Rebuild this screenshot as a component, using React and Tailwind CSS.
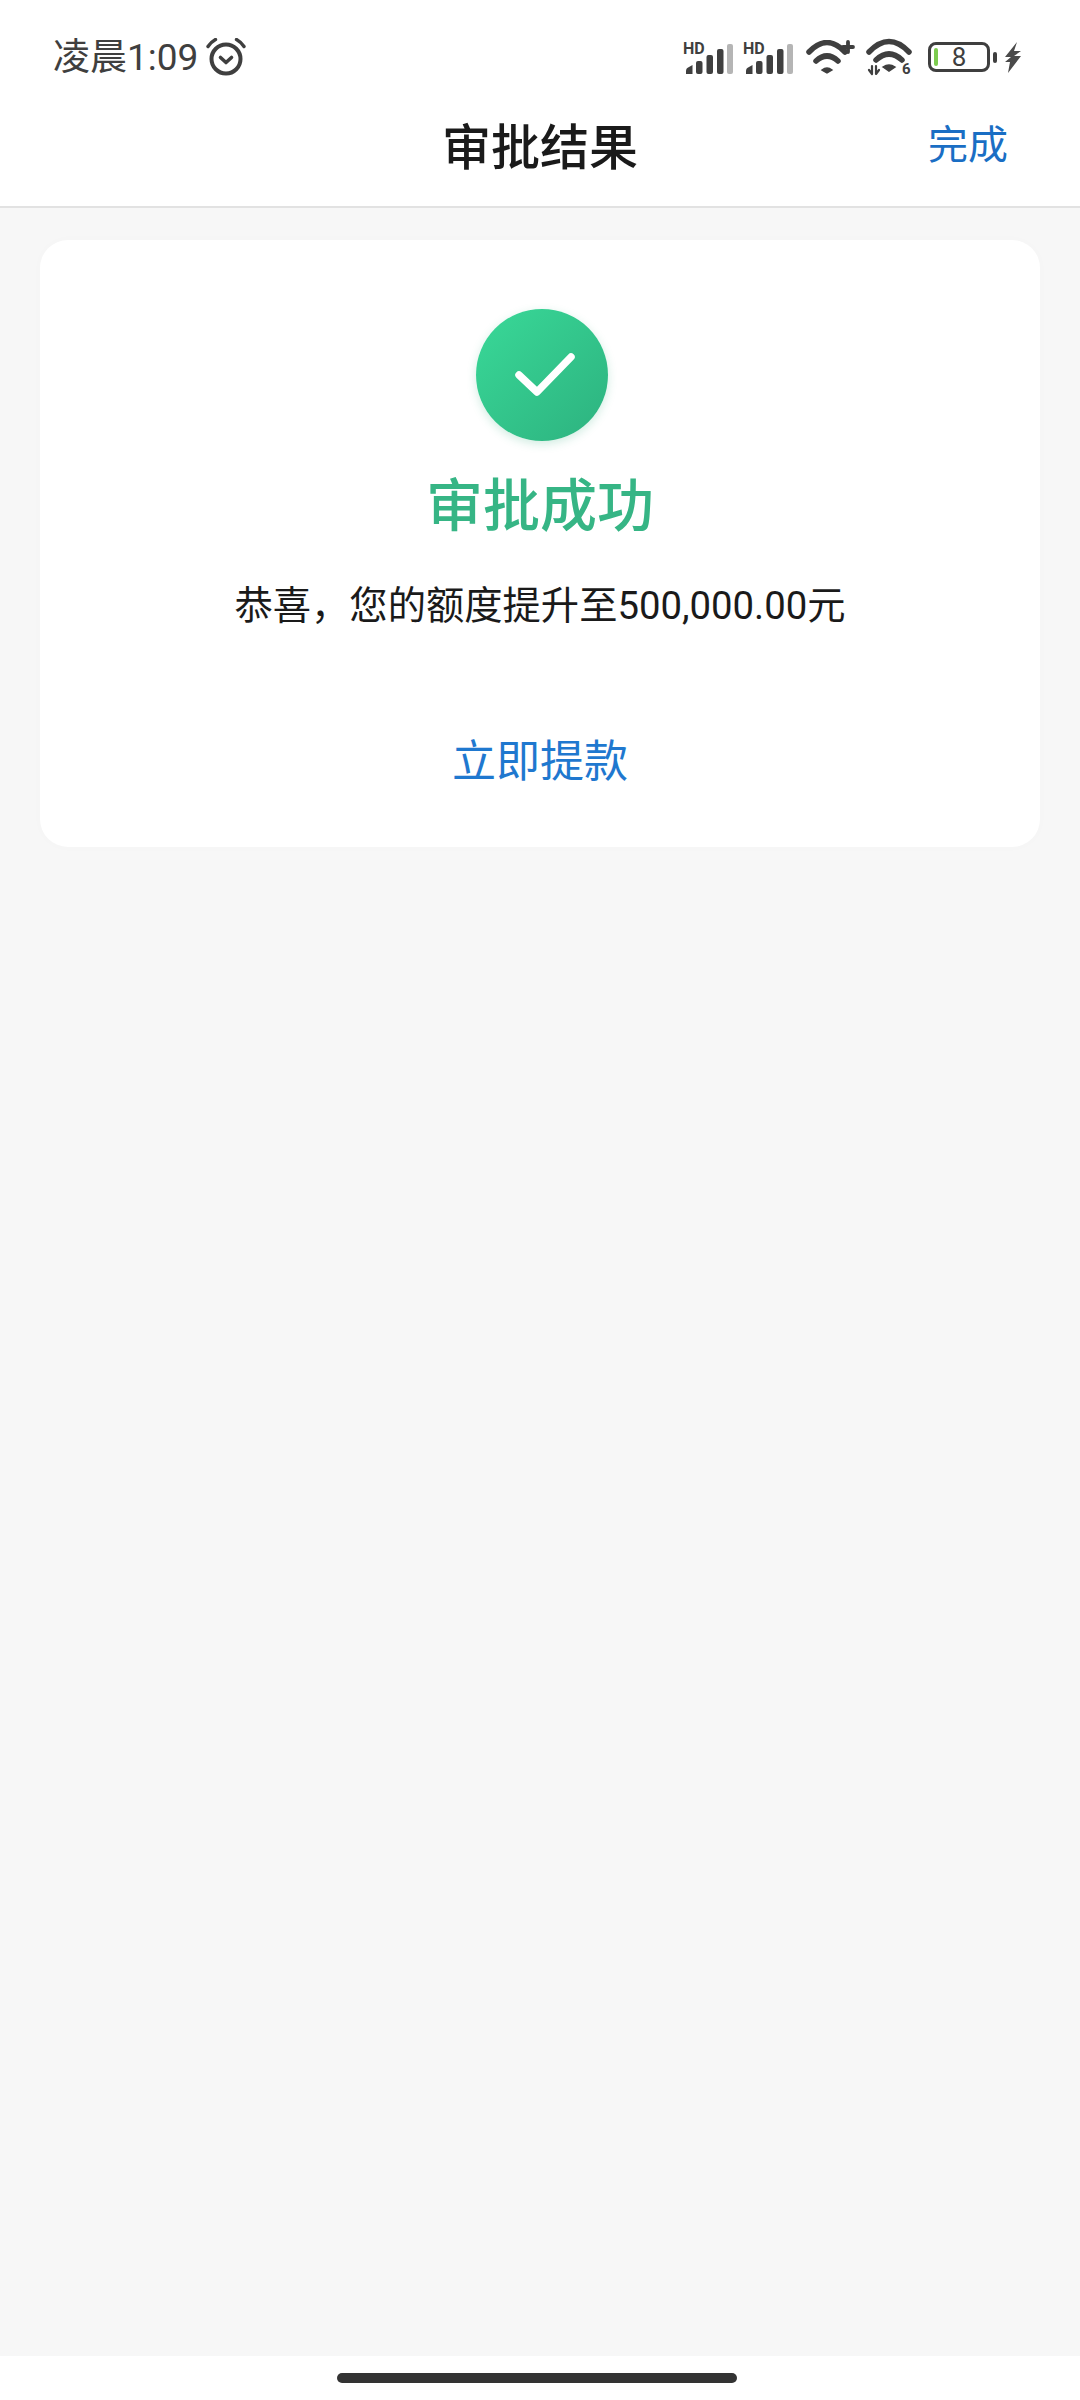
import React from "react";

const FONT = "font-['Roboto','Noto_Sans_CJK_SC',sans-serif]";

function AlarmIcon() {
  return (
    <svg width="40" height="38" viewBox="0 0 40 38" fill="none" stroke="#3f3f3f" strokeLinecap="round" strokeLinejoin="round">
      <circle cx="20" cy="21" r="14.5" strokeWidth="4" />
      <path d="M14.5 19.5 L20 24.5 L25.5 19.5" strokeWidth="3.6" />
      <path d="M2 8.5 Q5 4 9.5 1.5" strokeWidth="3.4" />
      <path d="M38 8.5 Q35 4 30.5 1.5" strokeWidth="3.4" />
    </svg>
  );
}

function SignalIcon() {
  return (
    <svg className="mb-[6px]" width="50" height="39" viewBox="0 -6 50 39" fill="#3f3f3f">
      <text x="0" y="13" fontFamily="Roboto, sans-serif" fontWeight="700" fontSize="16">HD</text>
      <path d="M3 33 v-3 q0-3 3-4 l3.500-2 v9 z" />
      <rect x="13" y="20" width="6.500" height="13" rx="2" />
      <rect x="23.500" y="14" width="6.500" height="19" rx="2" />
      <rect x="34" y="8" width="6.500" height="25" rx="2" />
      <rect x="44" y="3" width="6" height="30" rx="2" fill="#b5b5b5" />
    </svg>
  );
}

function WifiPlusIcon() {
  return (
    <svg width="50" height="34" viewBox="0 0 50 34" fill="none" stroke="#3f3f3f" strokeLinecap="round">
      <path d="M3 12 Q21 -7 39 12" strokeWidth="5.500" />
      <path d="M10 21 Q21 11 32 21" strokeWidth="5.500" />
      <path d="M16 30 L21 33 L26 30 Q21 26 16 30 Z" fill="#3f3f3f" strokeWidth="1.500" />
      <path d="M42 2 V12 M37 7 H47" strokeWidth="3.800" />
    </svg>
  );
}

function Wifi6Icon() {
  return (
    <svg width="48" height="40" viewBox="0 -2 48 40" fill="none" stroke="#3f3f3f" strokeLinecap="round">
      <path d="M3 13 Q23 -8 43 13" strokeWidth="5.500" />
      <path d="M10 21 Q23 9 36 21" strokeWidth="5.500" />
      <path d="M17 28 L23 32 L29 28 Q23 24 17 28 Z" fill="#3f3f3f" strokeWidth="1.500" />
      <path d="M3 31 L6 35 L6 27 M10 27 V35 L13 31" strokeWidth="2.200" strokeLinejoin="round" />
      <text x="36" y="35" fill="#3f3f3f" stroke="none" fontFamily="Roboto, sans-serif" fontWeight="700" fontSize="15">6</text>
    </svg>
  );
}

function BoltIcon() {
  return (
    <svg width="18" height="31" viewBox="0 0 18 31" fill="#4a4a4a">
      <path d="M13 0 L1 15 L7 15 L1 20 L6 20 L4 31 L17 14 L10 14 L17 9 L10 9 Z" />
    </svg>
  );
}

function Battery() {
  return (
    <div className="flex items-center">
      <div className="flex h-[30px] w-[62px] items-center rounded-[8px] border-[3px] border-[#3f3f3f] pl-[3px]">
        <div className="h-[18px] w-[4px] rounded-[2px] bg-[#7ccb4f]" />
        <span className="flex-1 pr-[7px] text-center text-[26px] leading-none text-[#3f3f3f]">8</span>
      </div>
      <div className="ml-[3px] h-[11px] w-[4px] rounded-[2px] bg-[#3f3f3f]" />
    </div>
  );
}

function CheckBadge() {
  return (
    <div className="ml-[3px] flex h-[132px] w-[132px] items-center justify-center rounded-full bg-gradient-to-br from-[#39d998] to-[#2db27f] shadow-[0_3px_10px_rgba(42,170,120,0.22)]">
      <svg className="ml-[6px]" width="60" height="44" viewBox="0 0 60 44" fill="none" stroke="#ffffff" strokeWidth="7.500" strokeLinecap="round" strokeLinejoin="round">
        <path d="M4 22 L22 39 L56 4" />
      </svg>
    </div>
  );
}

export default function App() {
  return (
    <div className={`flex h-[2400px] w-[1080px] flex-col bg-white ${FONT}`}>
      {/* status bar */}
      <div className="flex h-[114px] items-center justify-between pl-[53px] pr-[58px]">
        <div className="flex items-center gap-[8px]">
          <span className="text-[37px] leading-none text-[#3f3f3f]">凌晨1:09</span>
          <AlarmIcon />
        </div>
        <div className="flex items-center">
          <SignalIcon />
          <div className="ml-[10px]">
            <SignalIcon />
          </div>
          <div className="ml-[13px]">
            <WifiPlusIcon />
          </div>
          <div className="ml-[10px]">
            <Wifi6Icon />
          </div>
          <div className="ml-[14px]">
            <Battery />
          </div>
          <div className="ml-[7px]">
            <BoltIcon />
          </div>
        </div>
      </div>

      {/* title bar */}
      <div className="grid h-[94px] grid-cols-[1fr_auto_1fr] items-center border-b-2 border-[#e2e2e2] pb-[26px]">
        <div />
        <h1 className="mt-[2px] text-[49px] font-medium leading-none text-[#1a1a1a]">审批结果</h1>
        <div className="mb-[2px] pr-[72px] text-right text-[40px] leading-none text-[#1a6ec4]">完成</div>
      </div>

      {/* content */}
      <main className="flex-1 bg-[#f7f7f7] px-[40px] pt-[32px]">
        <div className="flex h-[607px] flex-col items-center rounded-[28px] bg-white pt-[69px] shadow-[0_0_12px_rgba(0,0,0,0.015)]">
          <CheckBadge />
          <h2 className="mt-[31px] text-[57px] font-medium leading-[70px] text-[#36b585]">审批成功</h2>
          <p className="mt-[39px] text-[38.300px] leading-[50px] text-[#1a1a1a]">恭喜，您的额度提升至500,000.00元</p>
          <button className="mt-[101px] text-[44px] leading-[60px] text-[#1f78cf]">立即提款</button>
        </div>
      </main>

      {/* home indicator */}
      <div className="flex h-[44px] justify-center bg-white pt-[17px]">
        <div className="mr-[6px] h-[10px] w-[400px] rounded-full bg-[#333333]" />
      </div>
    </div>
  );
}
